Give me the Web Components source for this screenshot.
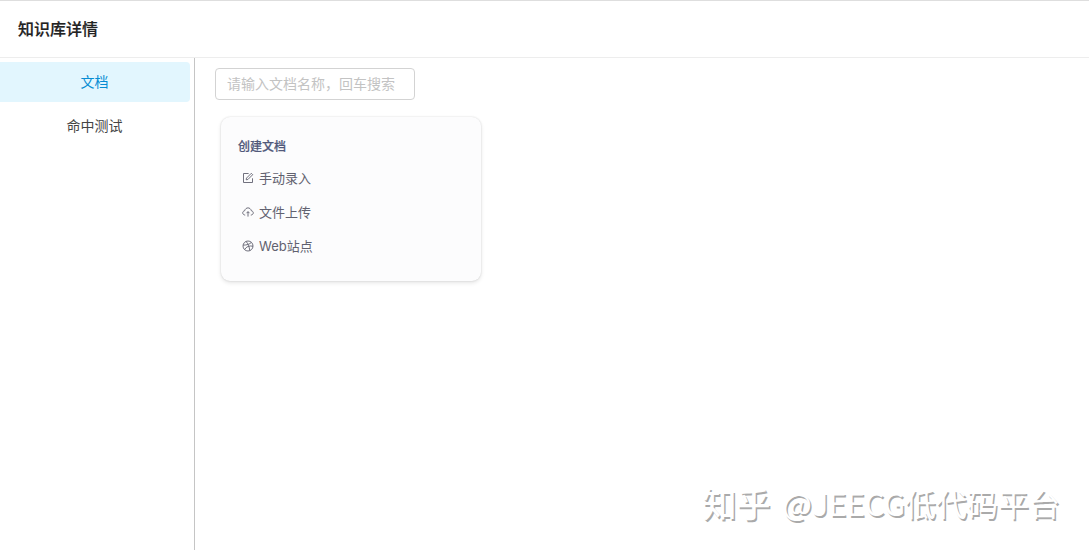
<!DOCTYPE html>
<html lang="zh-CN">
<head>
<meta charset="UTF-8">
<title>知识库详情</title>
<style>
    body {
        margin: 0;
        background: #fff;
        color: #444;
        font-family: Inter, "Noto Sans CJK SC", sans-serif;
        font-size: 14px;
    }
</style>
</head>
<body>
<knowledge-page heading="知识库详情">
    <side-tab slot="tabs" active>文档</side-tab>
    <side-tab slot="tabs">命中测试</side-tab>
    <search-box placeholder="请输入文档名称，回车搜索"></search-box>
    <create-card heading="创建文档">
        <create-action icon="edit">手动录入</create-action>
        <create-action icon="upload">文件上传</create-action>
        <create-action icon="web">Web站点</create-action>
    </create-card>
</knowledge-page>
<water-mark><span slot="brand">知乎</span>@JEECG低代码平台</water-mark>

<script>
    const ICONS = {
        edit: '<path d="M6.6 1.5H1.5v9h9V6.3M4.2 7.8l.3-1.7 4.8-4.8 1.4 1.4-4.8 4.8z"/>',
        upload: '<path d="M3.2 9.1C.1 8.8-.1 5.3 2.6 4.8 3.7.9 8.3.9 9.4 4.8c2.7.5 2.5 4-.6 4.3M6 10.6V5.8M4.5 7.2 6 5.6l1.5 1.6"/>',
        web: '<circle cx="6" cy="6" r="5"/><path d="M4.1 1.4c2 2.5 3.2 5.4 3.7 9.2M1.1 5.1c3.5.1 6.3-.8 8.3-2.7M2.6 9.6c1.7-3 4.5-4.2 8.4-3.4"/>'
    };

    class KnowledgePage extends HTMLElement {
        constructor() {
            super();
            this.attachShadow({ mode: 'open' });
        }

        connectedCallback() {
            this.shadowRoot.innerHTML = `
                <style>
                    :host {
                        display: flex;
                        flex-direction: column;
                        height: 100vh;
                        box-sizing: border-box;
                        border-top: 1px solid #dedede;
                        overflow: hidden;
                    }
                    header {
                        box-sizing: border-box;
                        height: 57px;
                        padding-left: 18px;
                        border-bottom: 1px solid #ededed;
                        line-height: 56px;
                        font-size: 16px;
                        font-weight: 500;
                        -webkit-text-stroke: .2px;
                        color: #222;
                    }
                    .body {
                        display: flex;
                        flex: 1;
                    }
                    nav {
                        display: flex;
                        flex-direction: column;
                        gap: 4px;
                        box-sizing: border-box;
                        width: 195px;
                        padding: 4px 4px 0 0;
                        border-right: 1px solid #c5c5c5;
                    }
                    main {
                        flex: 1;
                        padding: 10px 20px;
                    }
                </style>
                <header>${this.getAttribute('heading')}</header>
                <div class="body">
                    <nav><slot name="tabs"></slot></nav>
                    <main><slot></slot></main>
                </div>
            `;
        }
    }

    class SideTab extends HTMLElement {
        constructor() {
            super();
            this.attachShadow({ mode: 'open' }).innerHTML = `
                <style>
                    :host {
                        display: block;
                        box-sizing: border-box;
                        height: 40px;
                        padding-right: 1px;
                        line-height: 40px;
                        border-radius: 0 4px 4px 0;
                        text-align: center;
                        cursor: pointer;
                    }
                    :host([active]) {
                        background: #e2f6fe;
                        color: #078dd3;
                    }
                </style>
                <slot></slot>
            `;
        }
    }

    class SearchBox extends HTMLElement {
        constructor() {
            super();
            this.attachShadow({ mode: 'open' });
        }

        connectedCallback() {
            this.shadowRoot.innerHTML = `
                <style>
                    :host {
                        display: block;
                        width: 200px;
                        height: 32px;
                    }
                    input {
                        display: block;
                        box-sizing: border-box;
                        width: 100%;
                        height: 100%;
                        padding: 0 11px 2px;
                        border: 1px solid #d3d3d3;
                        border-radius: 4px;
                        outline: none;
                        font: inherit;
                    }
                    input::placeholder {
                        color: #c3c3c3;
                    }
                </style>
                <input type="text" placeholder="${this.getAttribute('placeholder')}">
            `;
        }
    }

    class CreateCard extends HTMLElement {
        constructor() {
            super();
            this.attachShadow({ mode: 'open' });
        }

        connectedCallback() {
            this.shadowRoot.innerHTML = `
                <style>
                    :host {
                        display: block;
                        box-sizing: border-box;
                        width: 260px;
                        height: 164px;
                        margin: 17px 0 0 6px;
                        padding: 20px 17px;
                        border-radius: 9px;
                        background: #fcfcfd;
                        box-shadow: 0 0 2px rgba(0, 0, 0, .14), 0 2px 4px rgba(0, 0, 0, .1);
                        color: #61616f;
                    }
                    h3 {
                        margin: 0 0 4px;
                        font-size: 12px;
                        font-weight: 500;
                        line-height: 20px;
                        -webkit-text-stroke: .2px;
                        color: #50587a;
                    }
                </style>
                <h3>${this.getAttribute('heading')}</h3>
                <slot></slot>
            `;
        }
    }

    class CreateAction extends HTMLElement {
        constructor() {
            super();
            this.attachShadow({ mode: 'open' });
        }

        connectedCallback() {
            this.shadowRoot.innerHTML = `
                <style>
                    :host {
                        display: flex;
                        align-items: center;
                        gap: 5px;
                        height: 34px;
                        padding-left: 4px;
                        font-size: 13px;
                        line-height: 20px;
                        cursor: pointer;
                    }
                    svg {
                        width: 12px;
                        height: 12px;
                        fill: none;
                        stroke: currentColor;
                        stroke-width: .9;
                    }
                </style>
                <svg viewBox="0 0 12 12">${ICONS[this.getAttribute('icon')]}</svg>
                <span><slot></slot></span>
            `;
        }
    }

    class WaterMark extends HTMLElement {
        constructor() {
            super();
            this.attachShadow({ mode: 'open' }).innerHTML = `
                <style>
                    :host {
                        position: absolute;
                        right: 29px;
                        bottom: 28px;
                        display: flex;
                        align-items: center;
                        gap: 12px;
                        height: 40px;
                        font-family: "Noto Sans CJK SC", sans-serif;
                        font-size: 31px;
                        white-space: nowrap;
                        color: #fff;
                        text-shadow: 1.5px 1.5px .5px #aaa;
                        pointer-events: none;
                    }
                    .brand {
                        font-size: 34px;
                        font-weight: 500;
                    }
                </style>
                <span class="brand"><slot name="brand"></slot></span>
                <span><slot></slot></span>
            `;
        }
    }

    customElements.define('knowledge-page', KnowledgePage);
    customElements.define('side-tab', SideTab);
    customElements.define('search-box', SearchBox);
    customElements.define('create-card', CreateCard);
    customElements.define('create-action', CreateAction);
    customElements.define('water-mark', WaterMark);
</script>
</body>
</html>
